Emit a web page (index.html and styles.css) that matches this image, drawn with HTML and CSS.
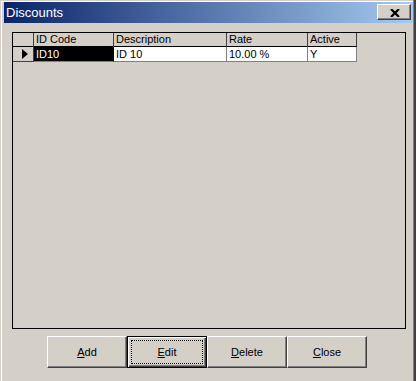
FILE: index.html
```html
<!DOCTYPE html>
<html>
    <head>
        <meta charset="UTF-8">
        <title>Discounts</title>
        <link rel="stylesheet" href="styles.css">
    </head>
    <body>
        <div class="window">
            <div class="titlebar">
                <span class="title">Discounts</span>
                <span class="close_btn">
                    <svg width="10" height="8" viewBox="0 0 10 8"><path d="M1 0 L9 8 M9 0 L1 8" stroke="#000" stroke-width="2.2" fill="none"/></svg>
                </span>
            </div>
            <div class="grid_box">
                <div class="grid_row header">
                    <div class="cell ind"></div>
                    <div class="cell">ID Code</div>
                    <div class="cell">Description</div>
                    <div class="cell">Rate</div>
                    <div class="cell">Active</div>
                </div>
                <div class="grid_row data">
                    <div class="cell ind"><span class="arrow"></span></div>
                    <div class="cell selected">ID10</div>
                    <div class="cell">ID 10</div>
                    <div class="cell">10.00 %</div>
                    <div class="cell">Y</div>
                </div>
            </div>
            <div class="buttons">
                <div class="btn"><u>A</u>dd</div>
                <div class="btn default"><span class="focus"><u>E</u>dit</span></div>
                <div class="btn"><u>D</u>elete</div>
                <div class="btn"><u>C</u>lose</div>
            </div>
        </div>
    </body>
</html>
```
FILE: styles.css
```css
html, body {
    margin : 0;
    padding : 0;
    background : #d4d0c8;
}
body {
    width : 416px;
    height : 381px;
    overflow : hidden;
    font-family : "Liberation Sans", Arial, sans-serif;
    font-size : 11px;
    color : #000;
}
.window {
    box-sizing : border-box;
    width : 416px;
    height : 381px;
    padding : 2px 1px 0 4px;
    border-right : 2px solid #404040;
    box-shadow : inset -1px 0 #808080, inset 1px 1px #d4d0c8, inset 2px 2px #fff;
    background : #d4d0c8;
}
.titlebar {
    display : flex;
    align-items : flex-start;
    justify-content : space-between;
    height : 21px;
    background : linear-gradient(to right, #0a246a, #a6caf0);
}
.title {
    padding-left : 2px;
    line-height : 21px;
    font-size : 13px;
    color : #fff;
}
.close_btn {
    box-sizing : border-box;
    display : flex;
    align-items : center;
    justify-content : center;
    width : 34px;
    height : 16px;
    margin : 2px 2px 0 0;
    padding : 1px 0 0 2px;
    background : #d4d0c8;
    border : 1px solid;
    border-color : #fff #404040 #404040 #fff;
    box-shadow : inset -1px -1px #808080;
}
.close_btn svg {
    display : block;
}
.grid_box {
    box-sizing : border-box;
    width : 394px;
    height : 297px;
    margin : 9px 0 0 8px;
    border : 1px solid #000;
    background : #d4d0c8;
}
.grid_row {
    display : grid;
    grid-template-columns : 21px 80px 113px 81px 49px;
}
.cell {
    box-sizing : border-box;
    padding-left : 2px;
    border-right : 1px solid #808080;
    border-bottom : 1px solid #808080;
    white-space : nowrap;
    overflow : hidden;
}
.header .cell {
    height : 14px;
    line-height : 13px;
    border-right-color : #404040;
    border-bottom-color : #000;
}
.data .cell {
    height : 15px;
    line-height : 14px;
    background : #fff;
}
.data .ind {
    display : flex;
    align-items : center;
    justify-content : center;
    background : #d4d0c8;
    border-right-color : #404040;
    border-bottom-color : #404040;
}
.data .selected {
    background : #000;
    color : #fff;
    border-right-color : #000;
}
.arrow {
    width : 0;
    height : 0;
    margin-left : 1px;
    border-left : 6px solid #000;
    border-top : 5px solid transparent;
    border-bottom : 5px solid transparent;
}
.buttons {
    display : flex;
    margin : 7px 0 0 43px;
}
.btn {
    box-sizing : border-box;
    display : flex;
    align-items : center;
    justify-content : center;
    width : 80px;
    height : 32px;
    border : 1px solid;
    border-color : #fff #404040 #404040 #fff;
    box-shadow : inset -1px -1px #808080;
}
.btn.default {
    border-color : #000;
    box-shadow : inset 1px 1px #fff, inset -1px -1px #404040, inset -2px -2px #808080;
}
.focus {
    flex : 1;
    align-self : stretch;
    display : flex;
    align-items : center;
    justify-content : center;
    margin : 3px;
    border : 1px dotted #000;
}
```
